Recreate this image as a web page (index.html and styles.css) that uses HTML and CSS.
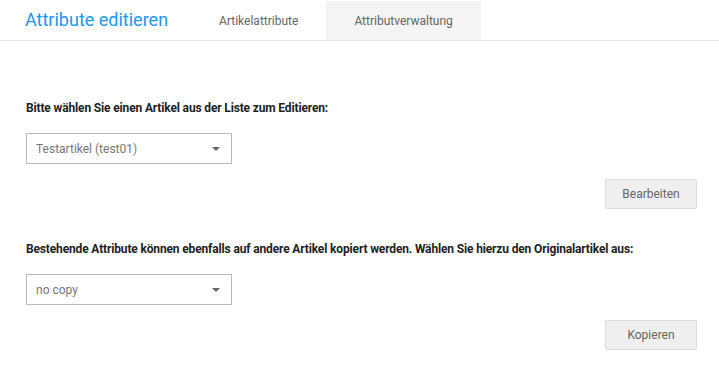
FILE: index.html
```html
<!DOCTYPE html>
<html lang="de">
<head>
  <meta charset="utf-8" />
  <title>Attribute editieren</title>
  <link rel="stylesheet" href="styles.css">
</head>
<body>
  <div class="header">
    <h1 class="title">Attribute editieren</h1>
    <div class="tabs">
      <a class="tab">Artikelattribute</a>
      <a class="tab active">Attributverwaltung</a>
    </div>
  </div>

  <div class="content">
    <div class="section">
      <label class="label">Bitte wählen Sie einen Artikel aus der Liste zum Editieren:</label>
      <div class="select">
        <span>Testartikel (test01)</span>
        <span class="caret"></span>
      </div>
      <div class="actions">
        <button class="btn">Bearbeiten</button>
      </div>
    </div>

    <div class="section">
      <label class="label">Bestehende Attribute können ebenfalls auf andere Artikel kopiert werden. Wählen Sie hierzu den Originalartikel aus:</label>
      <div class="select">
        <span>no copy</span>
        <span class="caret"></span>
      </div>
      <div class="actions">
        <button class="btn">Kopieren</button>
      </div>
    </div>
  </div>
</body>
</html>
```

FILE: styles.css
```css
* {
  box-sizing: border-box;
  margin: 0;
  padding: 0;
}
body {
  font-family: Roboto, "Liberation Sans", sans-serif;
  background: #fff;
  color: #222;
}
.header {
  display: flex;
  align-items: stretch;
  height: 41px;
  border-bottom: 1px solid #e2e2e2;
  padding-top: 1px;
}
.title {
  font-size: 18px;
  font-weight: 400;
  color: #2196f3;
  padding-left: 25px;
  margin-right: 23px;
  line-height: 38px;
}
.tabs {
  display: flex;
}
.tab {
  display: block;
  padding: 0 28px;
  font-size: 12px;
  color: #666;
  line-height: 40px;
}
.tab.active {
  background: #f4f4f4;
}
.content {
  padding: 57px 22px 0 26px;
}
.section {
  margin-bottom: 30px;
}
.label {
  display: block;
  font-size: 12px;
  font-weight: 700;
  letter-spacing: -0.15px;
  color: #222;
  line-height: 20px;
  margin-bottom: 15px;
}
.select {
  display: flex;
  align-items: center;
  justify-content: space-between;
  width: 206px;
  height: 31px;
  border: 1px solid #bbb;
  padding: 0 10px 0 9px;
  font-size: 12px;
  color: #777;
}
.caret {
  width: 0;
  height: 0;
  border-left: 4px solid transparent;
  border-right: 4px solid transparent;
  border-top: 4px solid #666;
  margin-right: 1px;
}
.actions {
  display: flex;
  justify-content: flex-end;
  margin-top: 15px;
}
.btn {
  width: 92px;
  height: 30px;
  background: #efefef;
  border: 1px solid #dcdcdc;
  border-radius: 2px;
  font-family: inherit;
  font-size: 12px;
  color: #666;
}
```
